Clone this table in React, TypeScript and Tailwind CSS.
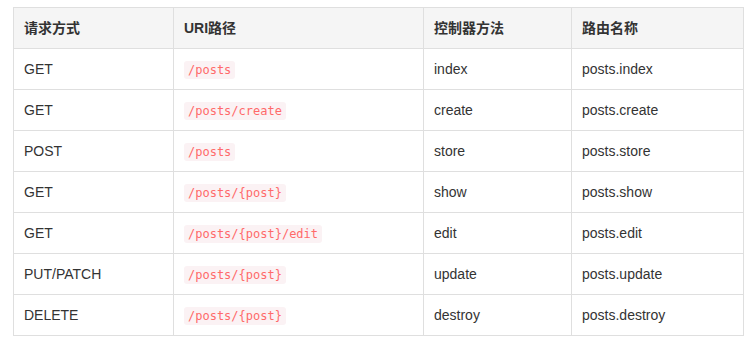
const routes = [
  { verb: 'GET', uri: '/posts', action: 'index', name: 'posts.index' },
  { verb: 'GET', uri: '/posts/create', action: 'create', name: 'posts.create' },
  { verb: 'POST', uri: '/posts', action: 'store', name: 'posts.store' },
  { verb: 'GET', uri: '/posts/{post}', action: 'show', name: 'posts.show' },
  { verb: 'GET', uri: '/posts/{post}/edit', action: 'edit', name: 'posts.edit' },
  { verb: 'PUT/PATCH', uri: '/posts/{post}', action: 'update', name: 'posts.update' },
  { verb: 'DELETE', uri: '/posts/{post}', action: 'destroy', name: 'posts.destroy' },
];

const cell = 'h-[41px] border border-[#dfdfdf] px-[10px] py-0 align-middle';

export default function App() {
  return (
    <div className="min-h-screen bg-white pl-[13px] pt-[7px] font-['Liberation_Sans','Noto_Sans_CJK_SC',sans-serif] text-[14px] text-[#333]">
      <table className="w-[730px] table-fixed border-collapse">
        <colgroup>
          <col className="w-[160px]" />
          <col className="w-[250px]" />
          <col className="w-[148px]" />
          <col className="w-[172px]" />
        </colgroup>
        <thead>
          <tr className="bg-[#f5f5f5] text-left">
            <th className={`${cell} font-bold`}>请求方式</th>
            <th className={`${cell} font-bold`}>URI路径</th>
            <th className={`${cell} font-bold`}>控制器方法</th>
            <th className={`${cell} font-bold`}>路由名称</th>
          </tr>
        </thead>
        <tbody>
          {routes.map((r, idx) => (
            <tr key={idx}>
              <td className={cell}>{r.verb}</td>
              <td className={cell}>
                <code className="rounded-[3px] bg-[#fbf2f4] px-[4px] py-[2px] font-['DejaVu_Sans_Mono',monospace] text-[12px] text-[#ff6a6a]">
                  {r.uri}
                </code>
              </td>
              <td className={cell}>{r.action}</td>
              <td className={cell}>{r.name}</td>
            </tr>
          ))}
        </tbody>
      </table>
    </div>
  );
}
